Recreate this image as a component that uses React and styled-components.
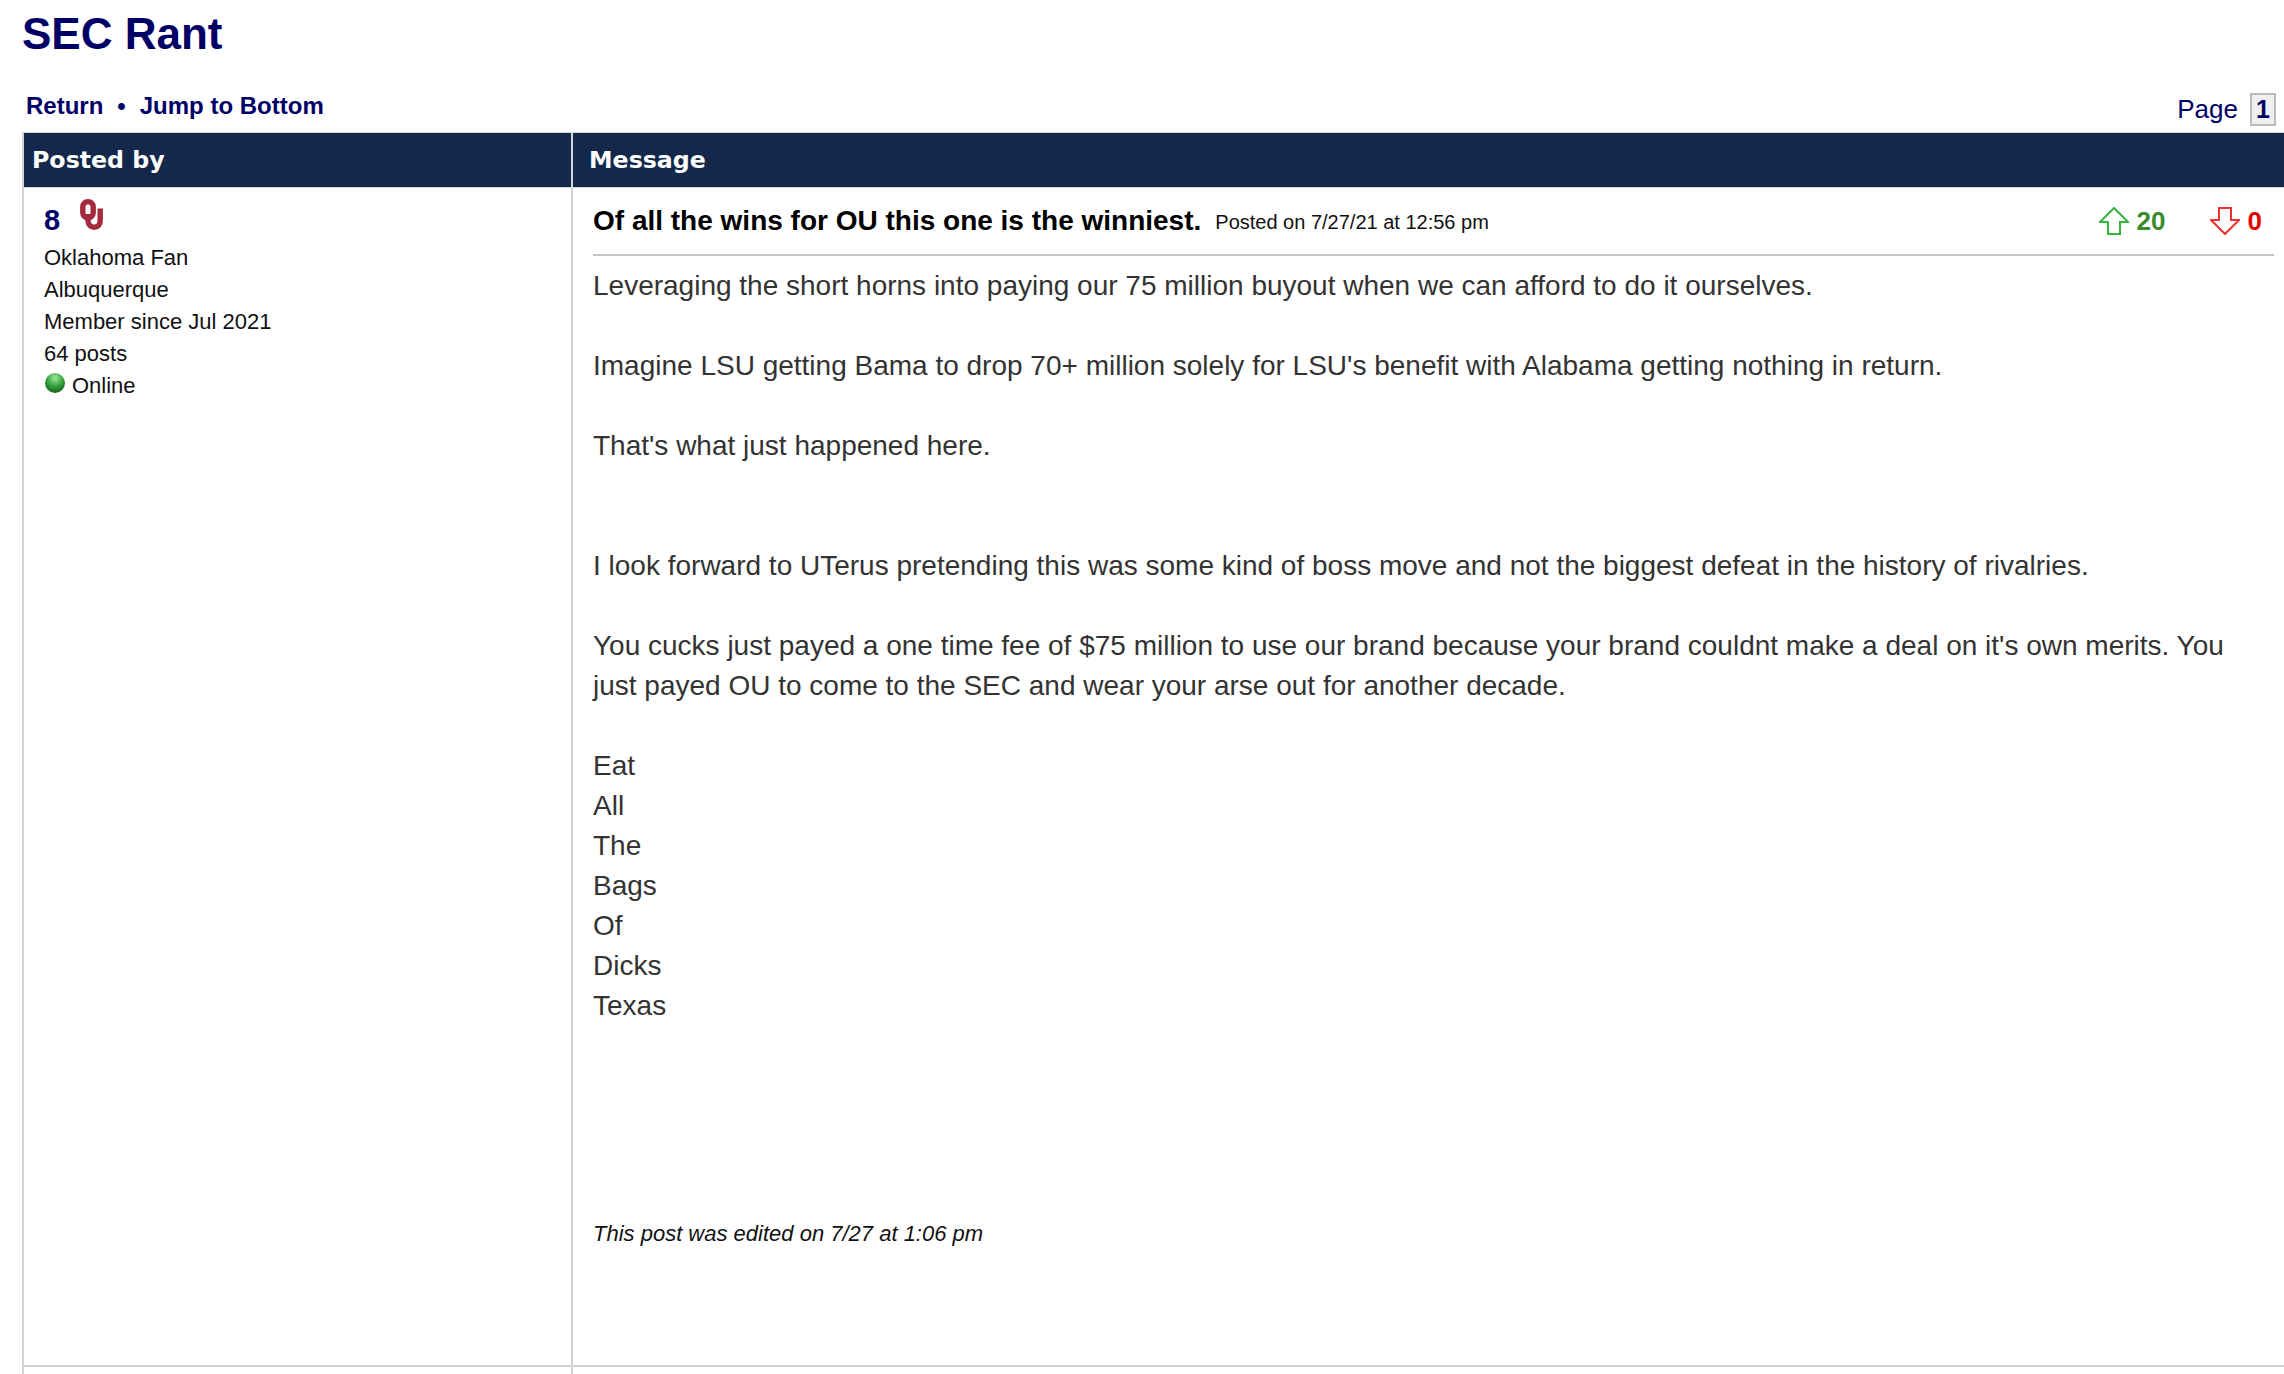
import React from 'react';
import styled, { createGlobalStyle } from 'styled-components';

const GlobalStyle = createGlobalStyle`
  html, body {
    margin: 0;
    padding: 0;
    background: #ffffff;
    font-family: "Liberation Sans", Arial, sans-serif;
    overflow: hidden;
  }
`;

const Page = styled.div`
  width: 2284px;
  height: 1374px;
  padding-left: 22px;
  box-sizing: border-box;
  overflow: hidden;
`;

const Title = styled.h1`
  margin: 0;
  padding-top: 9px;
  height: 80px;
  box-sizing: border-box;
  color: #000066;
  font-size: 44px;
  line-height: 50px;
  font-weight: bold;
`;

const TopBar = styled.div`
  display: flex;
  justify-content: space-between;
  align-items: flex-end;
  height: 52px;
  padding: 0 8px 0 4px;
`;

const TopLinks = styled.div`
  display: flex;
  gap: 14px;
  padding-bottom: 11px;
  color: #000066;
  font-size: 24px;
  line-height: 30px;
  font-weight: bold;
`;

const Pager = styled.div`
  display: flex;
  align-items: center;
  gap: 12px;
  padding-bottom: 6px;
  color: #000066;
  font-size: 26px;
`;

const PageNumber = styled.span`
  display: block;
  width: 26px;
  height: 33px;
  box-sizing: border-box;
  border: 2px solid #bbbbbb;
  background: #efefef;
  font-size: 25px;
  line-height: 29px;
  font-weight: bold;
  text-align: center;
`;

const Table = styled.div`
  display: grid;
  grid-template-columns: 547px 1fr;
  grid-template-rows: 56px 1179px 7px;
  border-left: 2px solid #d3d3d3;
`;

const HeadCell = styled.div`
  background: #14284b;
  border-top: 1px solid #d3d6dc;
  border-bottom: 1px solid #d3d6dc;
  border-left: ${(p) => (p.$divider ? '2px solid #d3d6dc' : 'none')};
  color: #ffffff;
  font-family: "DejaVu Sans", "Liberation Sans", sans-serif;
  font-size: 23.7px;
  font-weight: bold;
  line-height: 55px;
  padding-left: ${(p) => (p.$divider ? '16px' : '8px')};
`;

const AuthorCell = styled.div`
  padding: 11px 0 0 20px;
  border-bottom: 2px solid #d3d3d3;
`;

const AuthorName = styled.div`
  display: flex;
  height: 43px;
  gap: 20px;
  color: #000066;
  font-size: 29px;
  font-weight: bold;
  line-height: 42px;
`;

const AuthorLine = styled.div`
  color: #111111;
  font-size: 22px;
  line-height: 32px;
`;

const OnlineLine = styled(AuthorLine)`
  display: flex;
  align-items: center;
  gap: 7px;
`;

const OnlineDot = styled.span`
  display: block;
  width: 20px;
  height: 20px;
  margin: -7px 0 0 1px;
  border-radius: 50%;
  background: radial-gradient(circle at 50% 25%, #9be89b 0%, #2e9a35 50%, #0a4410 100%);
`;

const MessageCell = styled.div`
  border-left: 2px solid #d3d3d3;
  border-bottom: 2px solid #d3d3d3;
  padding: 0 10px 0 20px;
`;

const SpacerCell = styled.div`
  border-left: ${(p) => (p.$divider ? '2px solid #d3d3d3' : 'none')};
`;

const MessageHead = styled.div`
  display: flex;
  align-items: center;
  height: 66px;
  border-bottom: 2px solid #c4c4c4;
`;

const Subject = styled.span`
  color: #000000;
  font-size: 28px;
  font-weight: bold;
`;

const PostedOn = styled.span`
  margin-left: 14px;
  padding-top: 3px;
  color: #111111;
  font-size: 20px;
`;

const Votes = styled.div`
  display: flex;
  align-items: center;
  margin-left: auto;
  padding-right: 12px;
`;

const Vote = styled.div`
  display: flex;
  align-items: center;
  gap: 8px;
  margin-left: ${(p) => (p.$down ? '44px' : '0')};
  color: ${(p) => (p.$down ? '#e60000' : '#3a8a2e')};
  font-size: 26px;
  font-weight: bold;
`;

const Body = styled.div`
  padding-top: 10px;
  color: #333333;
  font-size: 28px;
  line-height: 40px;
`;

const Paragraph = styled.p`
  margin: 0 0 ${(p) => p.$after || 40}px;
`;

const Edited = styled.div`
  margin-top: 192px;
  color: #111111;
  font-size: 22px;
  font-style: italic;
  line-height: 32px;
`;

function Arrow({ down }) {
  const color = down ? '#f03030' : '#35b53a';
  return (
    <svg width="30" height="28" viewBox="0 0 30 28" fill="#fff" stroke={color} strokeWidth="2">
      <path d={down ? 'M9 1h12v12h8L15 27 1 13h8z' : 'M9 27h12V15h8L15 1 1 15h8z'} />
    </svg>
  );
}

function OuLogo() {
  return (
    <svg width="24" height="31" viewBox="0 0 24 31" fill="none" stroke="#a52a3e" strokeWidth="5.4">
      <rect x="2.8" y="2.8" width="10.4" height="16" rx="5" />
      <path d="M8 15v6.5c0 4 2.6 6.8 6.2 6.8s6-2.8 6-6.8V9.5" />
    </svg>
  );
}

const lines = ['Eat', 'All', 'The', 'Bags', 'Of', 'Dicks', 'Texas'];

export default function App() {
  return (
    <Page>
      <GlobalStyle />
      <Title>SEC Rant</Title>
      <TopBar>
        <TopLinks>
          <span>Return</span>
          <span>•</span>
          <span>Jump to Bottom</span>
        </TopLinks>
        <Pager>
          <span>Page</span>
          <PageNumber>1</PageNumber>
        </Pager>
      </TopBar>
      <Table>
        <HeadCell>Posted by</HeadCell>
        <HeadCell $divider>Message</HeadCell>
        <AuthorCell>
          <AuthorName>
            <span>8</span>
            <OuLogo />
          </AuthorName>
          <AuthorLine>Oklahoma Fan</AuthorLine>
          <AuthorLine>Albuquerque</AuthorLine>
          <AuthorLine>Member since Jul 2021</AuthorLine>
          <AuthorLine>64 posts</AuthorLine>
          <OnlineLine>
            <OnlineDot />
            Online
          </OnlineLine>
        </AuthorCell>
        <MessageCell>
          <MessageHead>
            <Subject>Of all the wins for OU this one is the winniest.</Subject>
            <PostedOn>Posted on 7/27/21 at 12:56 pm</PostedOn>
            <Votes>
              <Vote>
                <Arrow />
                20
              </Vote>
              <Vote $down>
                <Arrow down />
                0
              </Vote>
            </Votes>
          </MessageHead>
          <Body>
            <Paragraph>Leveraging the short horns into paying our 75 million buyout when we can afford to do it ourselves.</Paragraph>
            <Paragraph>Imagine LSU getting Bama to drop 70+ million solely for LSU's benefit with Alabama getting nothing in return.</Paragraph>
            <Paragraph $after={80}>That's what just happened here.</Paragraph>
            <Paragraph>I look forward to UTerus pretending this was some kind of boss move and not the biggest defeat in the history of rivalries.</Paragraph>
            <Paragraph>You cucks just payed a one time fee of $75 million to use our brand because your brand couldnt make a deal on it's own merits. You just payed OU to come to the SEC and wear your arse out for another decade.</Paragraph>
            {lines.map((line) => (
              <div key={line}>{line}</div>
            ))}
            <Edited>This post was edited on 7/27 at 1:06 pm</Edited>
          </Body>
        </MessageCell>
        <SpacerCell />
        <SpacerCell $divider />
      </Table>
    </Page>
  );
}
